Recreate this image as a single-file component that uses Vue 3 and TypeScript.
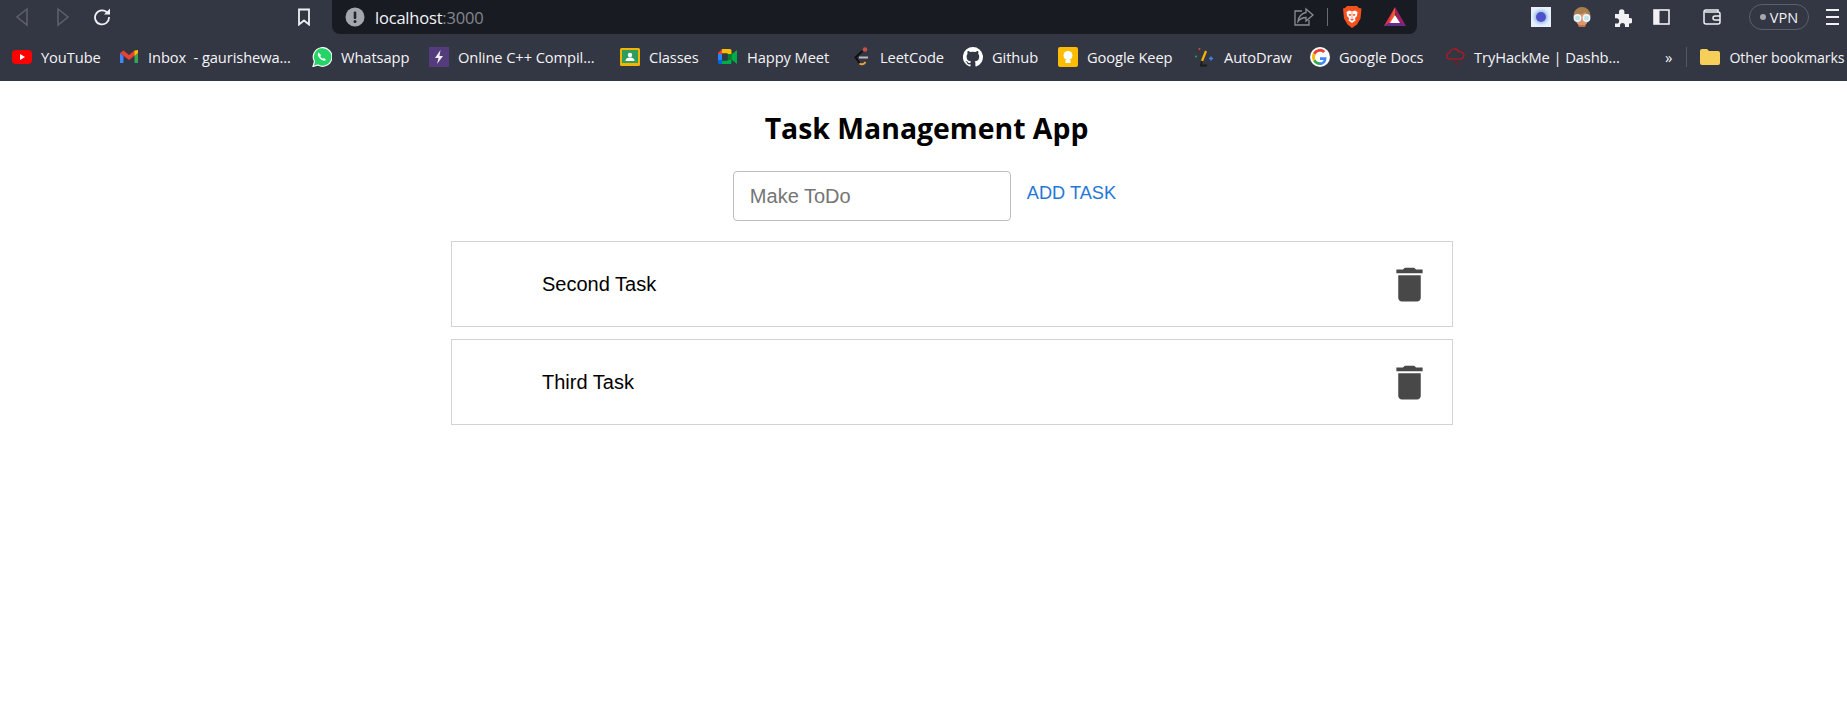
<script setup lang="ts">
interface Bookmark { label: string; icon: string; width: number }
const bookmarks: Bookmark[] = [
  { label: 'YouTube', icon: 'yt', width: 107 },
  { label: 'Inbox  - gaurishewa...', icon: 'gm', width: 193 },
  { label: 'Whatsapp', icon: 'wa', width: 117 },
  { label: 'Online C++ Compil...', icon: 'cpp', width: 191 },
  { label: 'Classes', icon: 'cl', width: 98 },
  { label: 'Happy Meet', icon: 'meet', width: 133 },
  { label: 'LeetCode', icon: 'leet', width: 112 },
  { label: 'Github', icon: 'gh', width: 95 },
  { label: 'Google Keep', icon: 'keep', width: 137 },
  { label: 'AutoDraw', icon: 'auto', width: 115 },
  { label: 'Google Docs', icon: 'g', width: 135 },
  { label: 'TryHackMe | Dashb...', icon: 'thm', width: 220 }
]
const tasks: string[] = ['Second Task', 'Third Task']
</script>

<template>
  <div class="page">
    <header class="chrome">
      <div class="toolbar">
        <div class="nav">
          <svg class="ic back" width="14" height="20" viewBox="0 0 14 20"><path d="M12 2 2 10l10 8z" fill="none" stroke="#5d606c" stroke-width="1.6" /></svg>
          <svg class="ic fwd" width="14" height="20" viewBox="0 0 14 20"><path d="M2 2l10 8-10 8z" fill="none" stroke="#5d606c" stroke-width="1.6" /></svg>
          <svg class="ic reload" width="18" height="18" viewBox="0 0 18 18"><path d="M14.6 5.2A7 7 0 1 0 16 9" fill="none" stroke="#f1f1f3" stroke-width="1.8" /><path d="M11 6.4h6V.6z" fill="#f1f1f3" /></svg>
          <svg class="ic mark" width="14" height="18" viewBox="0 0 14 18"><path d="M2 1.5h10v15l-5-4-5 4z" fill="none" stroke="#f1f1f3" stroke-width="1.8" /></svg>
        </div>
        <div class="omnibox">
          <svg class="info" width="20" height="20" viewBox="0 0 20 20"><circle cx="10" cy="10" r="9.5" fill="#a5a7ae" /><rect x="8.7" y="4.5" width="2.6" height="7.5" rx="1" fill="#23252d" /><circle cx="10" cy="14.6" r="1.5" fill="#23252d" /></svg>
          <span class="url">localhost<span class="port">:3000</span></span>
          <span class="grow"></span>
          <svg width="22" height="20" viewBox="0 0 22 20"><path d="M9 4H2v14h14v-5" fill="none" stroke="#8b8d94" stroke-width="1.3" /><path d="M13 2l7 6-7 6v-3.5c-4 0-6 1.5-8 4 .6-4.5 3-8 8-9z" fill="none" stroke="#8b8d94" stroke-width="1.3" /></svg>
          <span class="omni-sep"></span>
          <svg width="20" height="24" viewBox="0 0 20 24"><path d="M5 1h10l2 2 2.500.5-1 10-3.500 6L10 23l-4.500-3.500-3.500-6-1-10L3 3z" fill="#f4511e" /><path d="M4.500 7 7 5.500l3 1 3-1L15.500 7 15 11l-2 2 .5 2.500L10 18l-3.500-2.500L7 13l-2-2z" fill="#fff" /><path d="M7 9.500h2L8 11zM11 9.500h2l-1 1.500zM8.500 14h3L10 15.500zM10 7v6" fill="#f4511e" stroke="#f4511e" stroke-width=".6" /></svg>
          <svg class="bat" width="22" height="20" viewBox="0 0 22 20"><path d="M11 0 0 19h6z" fill="#e8304a" /><path d="M11 0v6l5 13h6z" fill="#9e1f63" /><path d="M0 19l5-3.500h12L22 19z" fill="#662d91" /><path d="M11 0 5 15.500h2.500L11 8z" fill="#f15a29" /><path d="M11 8l5 8H6z" fill="#fff" /></svg>
        </div>
        <div class="exts">
          <div class="ext-square"><span></span></div>
          <svg class="avatar" width="20" height="20" viewBox="0 0 20 20"><circle cx="10" cy="8.500" r="8.500" fill="#a97f4f" /><path d="M3 9c0 6 3 10 7 10s7-4 7-10c-2-1-3-3-3.500-4C11 7.500 6 8 3 9z" fill="#d99a72" /><path d="M6 18h8l-1 2H7z" fill="#c4714a" /><circle cx="5.500" cy="11" r="3.200" fill="#bfe6ec" stroke="#f2f7f8" stroke-width="1.400" /><circle cx="14.500" cy="11" r="3.200" fill="#bfe6ec" stroke="#f2f7f8" stroke-width="1.400" /></svg>
          <svg class="puzzle" width="19" height="19" viewBox="0 0 19 19"><path d="M2 6h4V4a2.700 2.700 0 0 1 5.400 0v2h4.600v4h1a2.700 2.700 0 0 1 0 5.400h-1V19h-4v-1.500a2.500 2.500 0 0 0-5 0V19H2v-3.500h1.500a2.600 2.600 0 0 0 0-5.200H2z" fill="#f1f1f3" /></svg>
          <svg class="side" width="17" height="16" viewBox="0 0 17 16"><rect x="1" y="1" width="15" height="14" fill="none" stroke="#f1f1f3" stroke-width="1.600" /><rect x="1" y="1" width="5.500" height="14" fill="#f1f1f3" /></svg>
          <svg class="wallet" width="20" height="18" viewBox="0 0 20 18"><path d="M16 4V2H4a2 2 0 0 0-2 2v10a2 2 0 0 0 2 2h12a2 2 0 0 0 2-2V6a2 2 0 0 0-2-2H3" fill="none" stroke="#f1f1f3" stroke-width="1.500" /><path d="M18 8h-5a2 2 0 0 0 0 4h5" fill="none" stroke="#f1f1f3" stroke-width="1.500" /></svg>
          <div class="vpn"><i></i>VPN</div>
          <div class="menu"><i></i><i></i><i></i></div>
        </div>
      </div>

      <nav class="bookmarks">
        <div v-for="b in bookmarks" :key="b.label" class="bm" :style="{ width: b.width + 'px' }">
          <svg class="bm-ic" width="20" height="20" viewBox="0 0 20 20">
            <template v-if="b.icon === 'yt'"><rect y="3" width="20" height="14" rx="4" fill="#f00" /><path d="M8 7l5 3-5 3z" fill="#fff" /></template>
            <template v-else-if="b.icon === 'gm'"><path d="M1 6v10h3.500V9z" fill="#4285f4" /><path d="M15.500 9v7H19V6z" fill="#34a853" /><path d="M1 6 4.500 3.500 10 8l5.500-4.500L19 6l-9 7z" fill="#ea4335" /><path d="M15.500 3.500 19 3v3l-3.500 3z" fill="#fbbc04" /></template>
            <template v-else-if="b.icon === 'wa'"><path d="M1 19.500l1.500-5A9.300 9.300 0 1 1 6 18z" fill="#25d366" stroke="#fff" stroke-width="1.200" /><path d="M6.500 5.500c-1.500 1.500-.5 4 1.500 6s4.500 3 6 1.500l-2-2-1.200.7c-1-.5-2-1.500-2.500-2.500l.7-1.200z" fill="#fff" /></template>
            <template v-else-if="b.icon === 'cpp'"><rect width="20" height="20" fill="#533b7c" /><path d="M11.500 3 6 11h3.500L8 17l6-8h-3.500z" fill="#f1f1f3" /></template>
            <template v-else-if="b.icon === 'cl'"><rect x="0" y="1" width="20" height="18" rx="1.500" fill="#f4b400" /><rect x="2" y="3" width="16" height="13" fill="#2e9e5b" /><circle cx="10" cy="8" r="2.200" fill="#fff" /><path d="M5.500 14a4.500 3.500 0 0 1 9 0z" fill="#fff" /></template>
            <template v-else-if="b.icon === 'meet'"><path d="M0 6l4-4v5H0z" fill="#ea4335" /><path d="M4 2h8a1.500 1.500 0 0 1 1.500 1.500V7H9.500V6.500H4z" fill="#fbbc04" /><path d="M0 7h4v6H0z" fill="#2684fc" /><path d="M0 13h4v4H1.500A1.500 1.500 0 0 1 0 15.500z" fill="#0066da" /><path d="M4 13.500h5.500V13h4v2.500A1.500 1.500 0 0 1 12 17H4z" fill="#00ac47" /><path d="M9.500 7h4v6h-4z" fill="#00832d" /><path d="M13.500 7.500 19 3v14l-5.500-4.500z" fill="#00ac47" /><rect x="4" y="6.500" width="5.500" height="7" fill="#333643" /></template>
            <template v-else-if="b.icon === 'leet'"><path d="M11.500 4 4.500 10.500l4 5.500" fill="none" stroke="#111" stroke-width="2" /><path d="M8.500 16.500c2 1.500 4.500 1 6-1.500" fill="none" stroke="#f0a030" stroke-width="2" /><path d="M8 10.500h9" stroke="#bdbdbd" stroke-width="2" /><circle cx="14" cy="2.500" r="2.300" fill="#c9504a" /></template>
            <template v-else-if="b.icon === 'gh'"><path d="M10 0a10 10 0 0 0-3.200 19.500c.5.100.7-.2.700-.5v-1.700c-2.800.6-3.400-1.300-3.400-1.300-.4-1.100-1.100-1.500-1.100-1.500-.9-.6.100-.6.100-.6 1 .1 1.500 1 1.500 1 .9 1.500 2.300 1.100 2.900.8.100-.6.400-1.100.6-1.300-2.200-.3-4.500-1.100-4.500-4.900 0-1.100.4-2 1-2.700-.1-.3-.4-1.300.1-2.700 0 0 .8-.3 2.700 1a9.500 9.500 0 0 1 5 0c1.900-1.300 2.700-1 2.700-1 .5 1.400.2 2.400.1 2.700.6.700 1 1.600 1 2.700 0 3.800-2.300 4.600-4.500 4.900.4.300.7.900.7 1.900V19c0 .3.200.6.700.5A10 10 0 0 0 10 0z" fill="#fff" /></template>
            <template v-else-if="b.icon === 'keep'"><rect width="20" height="20" rx="2" fill="#fbbc04" /><circle cx="10" cy="8.500" r="4.500" fill="#fff" /><rect x="7.500" y="13" width="5" height="3" fill="#fff" /></template>
            <template v-else-if="b.icon === 'auto'"><path d="M11 4 7 14" stroke="#f4b400" stroke-width="2.200" /><path d="M5 18.500h7" stroke="#1b1b1b" stroke-width="2" /><path d="M7 14l-1 4" stroke="#1b1b1b" stroke-width="1.600" /><circle cx="4.500" cy="2" r="1" fill="#ea4335" /><circle cx="1" cy="9.500" r="1" fill="#34a853" /><path d="M14 11.500h4M16 9.500v4" stroke="#4285f4" stroke-width="1.400" /></template>
            <template v-else-if="b.icon === 'g'"><circle cx="10" cy="10" r="10" fill="#fff" /><path d="M16.500 10.200H10V13h3.700c-.5 1.500-1.900 2.300-3.700 2.300V18c3.800 0 6.700-3 6.500-7.800z" fill="#4285f4" /><path d="M5.500 12.500C6.200 14.200 8 15.300 10 15.300V18c-3.200 0-5.800-1.700-7-4.300z" fill="#34a853" /><path d="M5.500 12.500a5 5 0 0 1 0-4.800L3 5.800a8.500 8.500 0 0 0 0 7.900z" fill="#fbbc04" /><path d="M5.500 7.700C6.200 5.900 8 4.700 10 4.700c1.200 0 2.400.5 3.200 1.300l2.100-2.100A8 8 0 0 0 3 5.800z" fill="#ea4335" /></template>
            <template v-else-if="b.icon === 'thm'"><path d="M5 12a3 3 0 0 1-.5-6 5 5 0 0 1 9.500-1 3.500 3.500 0 0 1 2.500 7z" fill="none" stroke="#c4161c" stroke-width="1.200" /><path d="M8 14h6M9 16.500h5M11 18.500h3" stroke="#6b1f26" stroke-width="1" /></template>
          </svg>
          <span class="bm-text">{{ b.label }}</span>
        </div>
        <span class="more">»</span>
        <span class="bm-sep"></span>
        <div class="bm other">
          <svg class="bm-ic" width="20" height="18" viewBox="0 0 20 18"><path d="M0 3a2 2 0 0 1 2-2h5l2 2h9a2 2 0 0 1 2 2v10a2 2 0 0 1-2 2H2a2 2 0 0 1-2-2z" fill="#f6cf5b" /></svg>
          <span class="bm-text other-text">Other bookmarks</span>
        </div>
      </nav>
    </header>

    <main class="app">
      <h1 class="title">Task Management App</h1>
      <form class="add-form" @submit.prevent>
        <input class="todo" type="text" placeholder="Make ToDo" />
        <button class="add" type="submit">ADD TASK</button>
      </form>
      <ul class="list">
        <li v-for="t in tasks" :key="t" class="task">
          <span class="task-text">{{ t }}</span>
          <svg class="trash" width="45" height="45" viewBox="0 0 24 24"><path d="M6 19c0 1.100.9 2 2 2h8c1.100 0 2-.9 2-2V7H6v12zM19 4h-3.500l-1-1h-5l-1 1H5v2h14V4z" fill="#484848" /></svg>
        </li>
      </ul>
    </main>
  </div>
</template>

<style scoped>
.page {
  min-height: 715px;
  background: #fff;
  font-family: "Liberation Sans", Arial, sans-serif;
  overflow: hidden;
}
.chrome {
  height: 81px;
  background: #333643;
  font-family: "Open Sans", "Noto Sans", sans-serif;
}
.toolbar {
  height: 34px;
  display: flex;
  align-items: flex-start;
}
.nav {
  width: 332px;
  height: 34px;
  display: flex;
  align-items: center;
  flex: none;
  padding-left: 15px;
  box-sizing: border-box;
}
.back { margin-right: 27px; }
.fwd { margin-right: 23px; }
.reload { margin-right: 186px; }
.omnibox {
  width: 1085px;
  height: 34px;
  flex: none;
  box-sizing: border-box;
  background: #181b22;
  border-radius: 0 0 8px 8px;
  display: flex;
  align-items: center;
  padding: 0 11px 0 13px;
}
.url {
  margin-left: 10px;
  font-size: 16.500px;
  color: #f4f4f6;
  letter-spacing: -0.2px;
}
.port { color: #85878e; }
.grow { flex: 1; }
.omni-sep {
  width: 1px;
  height: 18px;
  background: #6a6c73;
  margin: 0 14px 0 12px;
}
.bat { margin-left: 22px; }
.exts {
  flex: 1;
  height: 34px;
  display: flex;
  align-items: center;
  padding-left: 114px;
}
.ext-square {
  width: 20px;
  height: 20px;
  background: #e9f0fb;
  display: flex;
  align-items: center;
  justify-content: center;
  margin-right: 21px;
}
.ext-square span {
  width: 10px;
  height: 10px;
  border-radius: 50%;
  background: #5050c8;
  box-shadow: 0 0 3px 2px #9ac4f0;
}
.avatar { margin-right: 21px; }
.puzzle { margin-right: 21px; }
.side { margin-right: 32px; }
.wallet { margin-right: 27px; }
.vpn {
  width: 60px;
  height: 26px;
  box-sizing: border-box;
  border: 1px solid #5c5f6d;
  border-radius: 13px;
  display: flex;
  align-items: center;
  justify-content: center;
  gap: 4px;
  color: #f1f1f3;
  font-size: 14.500px;
  margin-right: 17px;
}
.vpn i {
  width: 6px;
  height: 6px;
  border-radius: 50%;
  background: #a5a7ae;
}
.menu {
  width: 13px;
  display: flex;
  flex-direction: column;
  gap: 5px;
}
.menu i {
  height: 2px;
  background: #f1f1f3;
}
.bookmarks {
  height: 47px;
  display: flex;
  align-items: center;
  padding-left: 12px;
  padding-bottom: 1px;
  box-sizing: border-box;
  white-space: nowrap;
  overflow: hidden;
}
.bm {
  display: flex;
  align-items: center;
  flex: none;
}
.bm-ic { flex: none; margin-right: 9px; }
.bm-text {
  color: #f4f4f6;
  font-size: 14.700px;
  white-space: pre;
  letter-spacing: -0.1px;
}
.bm-text.other-text {
  font-size: 14.200px;
}
.more {
  flex: none;
  color: #f1f1f3;
  font-size: 15px;
  margin-right: 14px;
}
.bm-sep {
  flex: none;
  width: 1px;
  height: 20px;
  background: #555864;
  margin-right: 13px;
}
.app {
  display: flex;
  flex-direction: column;
  align-items: center;
}
.title {
  margin: 27px 0 0 6px;
  font-family: "Open Sans", "Noto Sans", sans-serif;
  font-size: 28.400px;
  line-height: 40px;
  font-weight: 700;
  color: #000;
}
.add-form {
  margin-top: 23px;
  margin-left: 2px;
  display: flex;
  align-items: flex-start;
  gap: 16px;
}
.todo {
  width: 278px;
  height: 50px;
  box-sizing: border-box;
  border: 1px solid #bdbdbd;
  border-radius: 4px;
  padding: 0 16px;
  font-family: "Liberation Sans", Arial, sans-serif;
  font-size: 20px;
  color: #333;
  outline: none;
}
.todo::placeholder { color: #757575; opacity: 1; }
.add {
  margin-top: 9px;
  padding: 0;
  border: 0;
  background: none;
  color: #1f78d8;
  font-family: "Liberation Sans", Arial, sans-serif;
  font-size: 18.200px;
  line-height: 26px;
}
.list {
  list-style: none;
  padding: 0;
  margin: 20px 0 0 451px;
  align-self: flex-start;
  width: 1002px;
  display: flex;
  flex-direction: column;
  gap: 12px;
}
.task {
  height: 86px;
  box-sizing: border-box;
  border: 1px solid #d3d3d3;
  display: flex;
  align-items: center;
  justify-content: space-between;
  padding: 0 20px 0 90px;
}
.task-text {
  font-size: 20px;
  color: #000;
}
.trash { display: block; }
</style>
